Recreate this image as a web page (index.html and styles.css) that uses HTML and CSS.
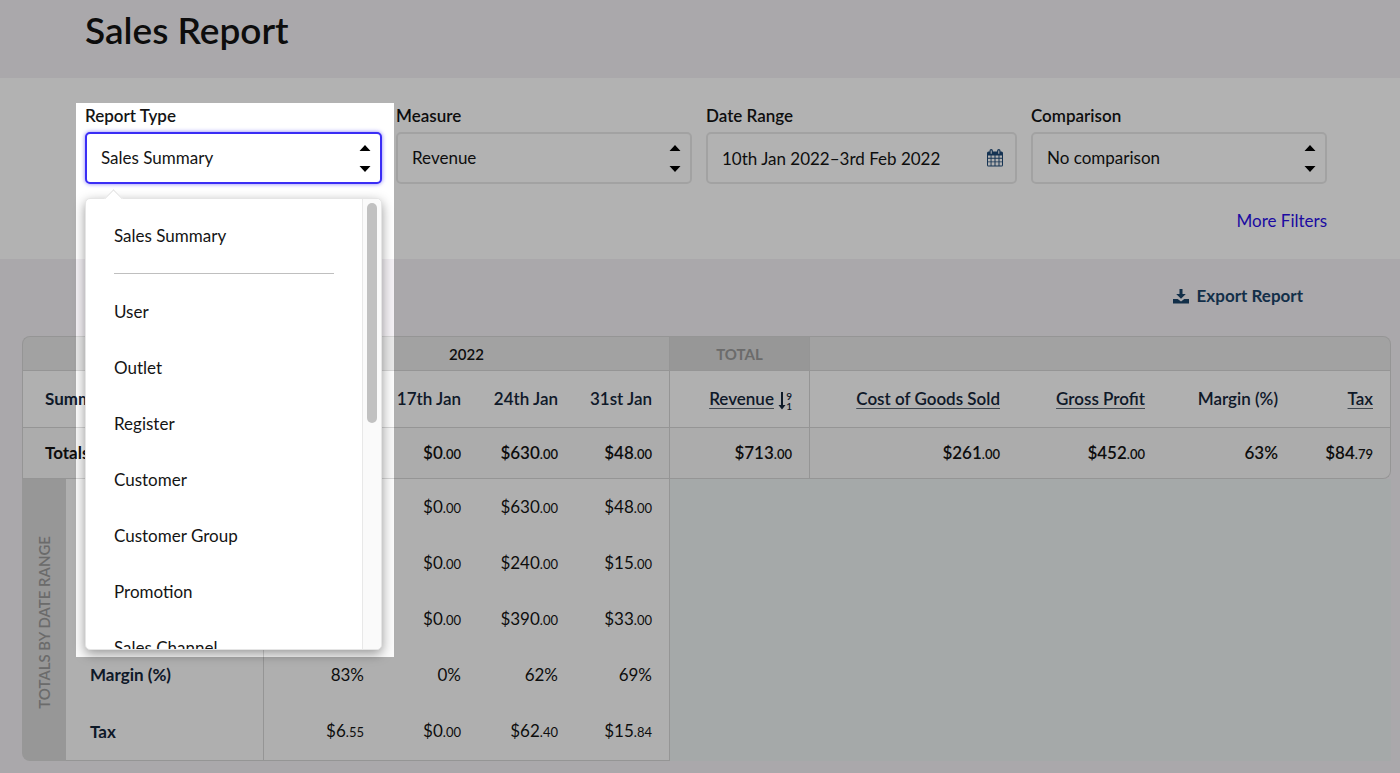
FILE: index.html
```html
<!DOCTYPE html>
<html lang="en">
<head>
  <meta charset="UTF-8" />
  <meta name="viewport" content="width=device-width, initial-scale=1.0"/>
  <title>Sales Report</title>
  <link rel="stylesheet" href="styles.css">
</head>
<body>

  <header class="page-header">
    <h1>Sales Report</h1>
  </header>

  <!-- Filters -->
  <form class="filters">
    <div class="filter-row">
      <div class="field field-active">
        <label for="report-type">Report Type</label>
        <div class="control">
          <select id="report-type">
            <option>Sales Summary</option>
          </select>
          <svg class="arrows" viewBox="0 0 12 29"><path d="M6 1l5.500 6h-11zM6 28l5.500-6h-11z"/></svg>
        </div>

        <div class="menu">
          <ul class="menu-list">
            <li class="menu-first"><button type="button">Sales Summary</button></li>
            <li><button type="button">User</button></li>
            <li><button type="button">Outlet</button></li>
            <li><button type="button">Register</button></li>
            <li><button type="button">Customer</button></li>
            <li><button type="button">Customer Group</button></li>
            <li><button type="button">Promotion</button></li>
            <li><button type="button">Sales Channel</button></li>
          </ul>
          <div class="menu-track"><div class="menu-thumb"></div></div>
        </div>

        <div class="spotlight"></div>
      </div>

      <div class="field">
        <label for="measure">Measure</label>
        <div class="control">
          <select id="measure">
            <option>Revenue</option>
          </select>
          <svg class="arrows" viewBox="0 0 12 29"><path d="M6 1l5.500 6h-11zM6 28l5.500-6h-11z"/></svg>
        </div>
      </div>

      <div class="field">
        <label for="date-range">Date Range</label>
        <div class="control">
          <input type="text" id="date-range" value="10th Jan 2022–3rd Feb 2022">
          <svg class="calendar" viewBox="0 0 16 18">
            <path fill-rule="evenodd" d="M1.500 2.500H2.500V1.800a1.700 1.700 0 0 1 3.400 0v.7h4.200v-.7a1.700 1.700 0 0 1 3.400 0v.7h1a1.500 1.500 0 0 1 1.500 1.500v12a1.500 1.500 0 0 1-1.500 1.500h-13A1.500 1.500 0 0 1 0 16V4a1.500 1.500 0 0 1 1.500-1.500zM1 6.500v2.300h2.600V6.500zm3.500 0v2.300h3V6.500zm4 0v2.300h3V6.500zm4 0v2.300H15V6.500zM1 9.700v2.700h2.600V9.700zm3.500 0v2.700h3V9.700zm4 0v2.700h3V9.700zm4 0v2.700H15V9.700zM1 13.300v3.200h2.600v-3.200zm3.500 0v3.200h3v-3.200zm4 0v3.200h3v-3.200zm4 0v3.200H15v-3.200zM3.700 1.500v3.200h1V1.500zm7.600 0v3.200h1V1.500z"/>
          </svg>
        </div>
      </div>

      <div class="field">
        <label for="comparison">Comparison</label>
        <div class="control">
          <select id="comparison">
            <option>No comparison</option>
          </select>
          <svg class="arrows" viewBox="0 0 12 29"><path d="M6 1l5.500 6h-11zM6 28l5.500-6h-11z"/></svg>
        </div>
      </div>
    </div>
    <a href="#" class="more-filters">More Filters</a>
  </form>

  <div class="actions">
    <button type="button" class="export">
      <svg viewBox="0 0 16 15"><path d="M6.500 0h3v5h3.300L8 9.800 3.200 5h3.300zM0 10h4.700L8 12.500 11.300 10H16v4.500H0z"/></svg>
      Export Report
    </button>
  </div>

  <!-- Report table -->
  <div class="report">
    <table>
      <colgroup>
        <col class="col-side">
        <col class="col-label">
        <col class="col-first">
        <col class="col-date">
        <col class="col-date">
        <col class="col-last">
        <col class="col-total">
        <col class="col-cost">
        <col class="col-profit">
        <col class="col-margin">
        <col class="col-tax">
      </colgroup>
      <thead>
        <tr class="row-group">
          <th colspan="2" class="corner-tl"></th>
          <th colspan="4" class="year line-right">2022</th>
          <th class="total line-right">TOTAL</th>
          <th colspan="4" class="corner-tr"></th>
        </tr>
        <tr class="row-head">
          <th colspan="2" class="name">Summary</th>
          <th>10th Jan</th>
          <th>17th Jan</th>
          <th>24th Jan</th>
          <th class="line-right">31st Jan</th>
          <th class="line-right">
            <a href="#">Revenue</a>
            <span class="sort">
              <svg viewBox="0 0 8 18"><path d="M3 0h2v13h2.500L4 17.500.500 13H3z"/></svg>
              <span class="sort-digits"><span>9</span><span>1</span></span>
            </span>
          </th>
          <th><a href="#">Cost of Goods Sold</a></th>
          <th><a href="#">Gross Profit</a></th>
          <th>Margin (%)</th>
          <th class="edge"><a href="#">Tax</a></th>
        </tr>
        <tr class="row-totals">
          <th colspan="2" class="name">Totals</th>
          <td>$35<small>.00</small></td>
          <td>$0<small>.00</small></td>
          <td>$630<small>.00</small></td>
          <td class="line-right">$48<small>.00</small></td>
          <td class="line-right">$713<small>.00</small></td>
          <td>$261<small>.00</small></td>
          <td>$452<small>.00</small></td>
          <td>63%</td>
          <td class="corner-br">$84<small>.79</small></td>
        </tr>
      </thead>
      <tbody>
        <tr>
          <th rowspan="5" class="side"><span>TOTALS BY DATE RANGE</span></th>
          <th class="label">Revenue</th>
          <td>$35<small>.00</small></td>
          <td>$0<small>.00</small></td>
          <td>$630<small>.00</small></td>
          <td class="line-right">$48<small>.00</small></td>
          <td rowspan="5" colspan="5" class="empty"></td>
        </tr>
        <tr>
          <th class="label">Cost of Goods Sold</th>
          <td>$6<small>.00</small></td>
          <td>$0<small>.00</small></td>
          <td>$240<small>.00</small></td>
          <td class="line-right">$15<small>.00</small></td>
        </tr>
        <tr>
          <th class="label">Gross Profit</th>
          <td>$29<small>.00</small></td>
          <td>$0<small>.00</small></td>
          <td>$390<small>.00</small></td>
          <td class="line-right">$33<small>.00</small></td>
        </tr>
        <tr>
          <th class="label">Margin (%)</th>
          <td>83%</td>
          <td>0%</td>
          <td>62%</td>
          <td class="line-right">69%</td>
        </tr>
        <tr class="row-last">
          <th class="label">Tax</th>
          <td>$6<small>.55</small></td>
          <td>$0<small>.00</small></td>
          <td>$62<small>.40</small></td>
          <td class="line-right">$15<small>.84</small></td>
        </tr>
      </tbody>
    </table>
  </div>

</body>
</html>
```
FILE: styles.css
```css
* {
  box-sizing: border-box;
}

body {
  margin: 0;
  min-height: 100vh;
  font-family: Lato, "Liberation Sans", sans-serif;
  font-size: 17px;
  line-height: 24px;
  color: #141414;
  background-color: #f4f1f5;
}

button,
select,
input {
  font: inherit;
  color: inherit;
}

.page-header {
  height: 78px;
  padding: 7px 85px;
}

.page-header h1 {
  margin: 0;
  font-size: 37px;
  line-height: 46px;
  font-weight: 600;
}

/* Filters */
.filters {
  padding: 26px 73px 26px 85px;
  background-color: #fff;
}

.filter-row {
  display: grid;
  grid-template-columns: 297fr 296fr 311fr 296fr;
  gap: 14px;
}

.field {
  position: relative;
}

.field label {
  display: block;
  margin-bottom: 4px;
  font-weight: 600;
}

.control {
  position: relative;
}

.control select,
.control input {
  display: block;
  width: 100%;
  height: 52px;
  padding: 0 40px 0 14px;
  border: 2px solid #e9e9e9;
  border-radius: 5px;
  background-color: #fff;
  appearance: none;
  outline: none;
}

.field-active .control select {
  border-color: #3a2df5;
  box-shadow: 0 0 4px rgba(58, 45, 245, 0.6);
}

.arrows {
  position: absolute;
  top: 12px;
  right: 11px;
  width: 12px;
  height: 29px;
  pointer-events: none;
}

.calendar {
  position: absolute;
  top: 17px;
  right: 14px;
  width: 16px;
  height: 18px;
  fill: #1f4a78;
}

.more-filters {
  display: block;
  width: fit-content;
  margin: 25px 0 0 auto;
  color: #2a0fe8;
  text-decoration: none;
}

/* Open menu */
.menu {
  position: absolute;
  z-index: 10;
  top: 94px;
  left: 0;
  right: 0;
  display: flex;
  height: 452px;
  border: 1px solid #e5e5e5;
  border-radius: 5px;
  background-color: #fff;
  box-shadow: 0 4px 12px rgba(0, 0, 0, 0.4);
}

.menu::before {
  content: "";
  position: absolute;
  top: -7px;
  left: 21px;
  width: 12px;
  height: 12px;
  border: 1px solid #e5e5e5;
  border-right: none;
  border-bottom: none;
  background-color: #fff;
  transform: rotate(45deg);
}

.menu-list {
  flex: 1;
  margin: 0;
  padding: 9px 28px 0;
  overflow: hidden;
  list-style: none;
}

.menu-list button {
  display: block;
  width: 100%;
  height: 56px;
  padding: 0;
  border: none;
  background: none;
  text-align: left;
  cursor: pointer;
}

.menu-first {
  height: 66px;
  margin-bottom: 10px;
  border-bottom: 1px solid #bfbfbf;
}

.menu-track {
  width: 19px;
  padding: 4px;
  border-left: 1px solid #e8e8e8;
  border-radius: 0 5px 5px 0;
  background-color: #fafafa;
}

.menu-thumb {
  width: 10px;
  height: 220px;
  border-radius: 5px;
  background-color: #c1c1c1;
}

/* Dims everything around the active field */
.spotlight {
  position: absolute;
  z-index: 20;
  top: -1px;
  left: -9px;
  right: -12px;
  height: 554px;
  box-shadow: 0 0 0 9999px rgba(0, 0, 0, 0.3);
  pointer-events: none;
}

.actions {
  display: flex;
  justify-content: flex-end;
  padding: 25px 97px 28px;
}

.export {
  display: flex;
  align-items: center;
  gap: 8px;
  padding: 0;
  border: none;
  background: none;
  color: #1b4469;
  font-weight: 700;
  cursor: pointer;
}

.export svg {
  width: 16px;
  height: 15px;
  fill: currentColor;
}

/* Report table */
.report {
  padding: 0 9px 12px 22px;
}

.report table {
  width: 100%;
  table-layout: fixed;
  border-collapse: separate;
  border-spacing: 0;
}

.col-side { width: 44px; }
.col-label { width: 198px; }
.col-first { width: 117px; }
.col-date { width: 97px; }
.col-last { width: 95px; }
.col-total { width: 140px; }
.col-cost { width: 207px; }
.col-profit { width: 145px; }
.col-margin { width: 133px; }
.col-tax { width: 96px; }

.report th,
.report td {
  padding: 0 17px 0 8px;
  text-align: right;
  white-space: nowrap;
}

.report th {
  font-weight: 600;
}

.report small {
  font-size: 13px;
}

.report th a {
  color: inherit;
  text-decoration: underline;
  text-decoration-color: #5c6672;
  text-underline-offset: 3px;
}

.report .row-group th {
  height: 35px;
  border-top: 1px solid #d6d6d6;
  border-bottom: 1px solid #d6d6d6;
  background-color: #e9e9e9;
  font-size: 15px;
}

.report .year,
.report .total {
  padding: 0;
  text-align: center;
}

.report .row-group .total {
  background-color: #d8d8d8;
  color: #9a9a9a;
  font-weight: 700;
}

.row-head th {
  height: 57px;
  border-bottom: 1px solid #d6d6d6;
  background-color: #fcfcfc;
  color: #15263a;
}

.row-totals th,
.row-totals td {
  height: 51px;
  border-bottom: 1px solid #d6d6d6;
  background-color: #f7f7f7;
  font-weight: 600;
}

.report .name {
  padding-left: 22px;
  border-left: 1px solid #d6d6d6;
  font-weight: 700;
  text-align: left;
}

.report .line-right {
  border-right: 1px solid #d6d6d6;
}

.corner-tl {
  border-left: 1px solid #d6d6d6;
  border-top-left-radius: 8px;
}

.corner-tr {
  border-right: 1px solid #d6d6d6;
  border-top-right-radius: 8px;
}

.edge {
  border-right: 1px solid #d6d6d6;
}

.corner-br {
  border-right: 1px solid #d6d6d6;
  border-bottom-right-radius: 8px;
}

tbody th,
tbody td {
  height: 56px;
  background-color: #fbfbfb;
}

.row-last .label,
.row-last td {
  height: 58px;
  border-bottom: 1px solid #d6d6d6;
}

.report .label {
  padding-left: 24px;
  border-right: 1px solid #d6d6d6;
  color: #15263a;
  font-weight: 700;
  text-align: left;
}

.report .side {
  padding: 10px 0 0;
  border-bottom-left-radius: 8px;
  background-color: #d8d8d8;
  color: #9a9a9a;
  font-size: 15px;
  text-align: center;
}

.side span {
  writing-mode: vertical-rl;
  transform: rotate(180deg);
}

.report .empty {
  background-color: #ecf2f2;
}

.sort {
  display: inline-flex;
  align-items: center;
  vertical-align: middle;
}

.sort svg {
  width: 8px;
  height: 18px;
  fill: currentColor;
}

.sort-digits {
  display: flex;
  flex-direction: column;
  font-size: 10px;
  line-height: 10px;
}
```
